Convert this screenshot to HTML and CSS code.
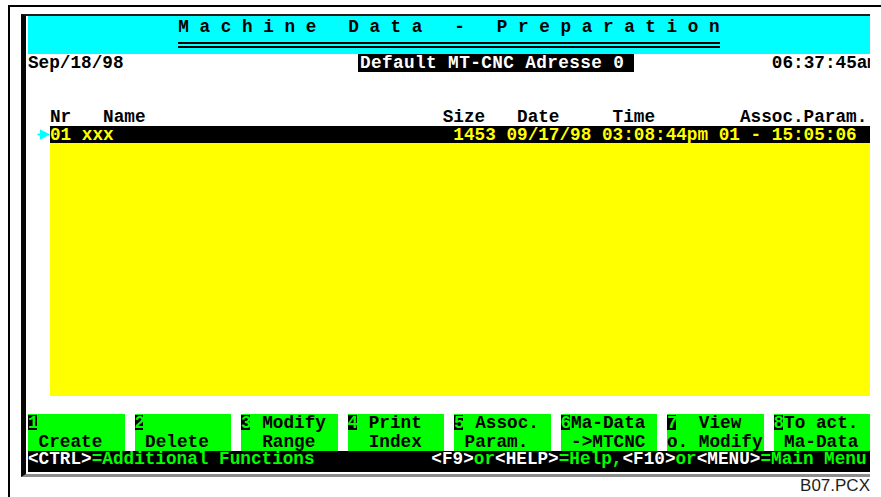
FILE: index.html
```html
<!DOCTYPE html>
<html lang="en">
<head>
<meta charset="utf-8">
<title>Machine Data - Preparation</title>
<link rel="stylesheet" href="styles.css">
</head>
<body>
<div class="frame">
  <div class="screen">
    <header class="titlebar">
      <h1 class="title">M a c h i n e   D a t a   -   P r e p a r a t i o n</h1>
    </header>

    <div class="inforow">
      <span class="date">Sep/18/98</span>
      <span class="target">Default MT-CNC Adresse 0</span>
      <span class="clock">06:37:45am</span>
    </div>

    <section class="files">
      <div class="head">Nr   Name                            Size   Date     Time        Assoc.Param.</div>
      <div class="current">
        <svg class="cursor" width="22" height="17" viewBox="0 0 22 17" aria-hidden="true">
          <rect x="9.5" y="7.6" width="5" height="1.8" fill="#00ffff"/>
          <path d="M12 3.2 L22 8.5 L12 13.8 Z" fill="#00ffff"/>
        </svg>
        <div class="bar">01 xxx                                1453 09/17/98 03:08:44pm 01 - 15:05:06</div>
      </div>
      <div class="listfill"></div>
    </section>

    <nav class="keys">
      <div class="key"><div class="kl"><span class="num">1</span></div><div class="kl"> Create</div></div>
      <div class="key"><div class="kl"><span class="num">2</span></div><div class="kl"> Delete</div></div>
      <div class="key"><div class="kl"><span class="num">3</span> Modify</div><div class="kl">  Range</div></div>
      <div class="key"><div class="kl"><span class="num">4</span> Print</div><div class="kl">  Index</div></div>
      <div class="key"><div class="kl"><span class="num">5</span> Assoc.</div><div class="kl"> Param.</div></div>
      <div class="key"><div class="kl"><span class="num">6</span>Ma-Data</div><div class="kl"> -&gt;MTCNC</div></div>
      <div class="key"><div class="kl"><span class="num">7</span>  View</div><div class="kl">o. Modify</div></div>
      <div class="key"><div class="kl"><span class="num">8</span>To act.</div><div class="kl"> Ma-Data</div></div>
    </nav>

    <div class="status"><span class="w">&lt;CTRL&gt;</span>=Additional Functions           <span class="w">&lt;F9&gt;</span>or<span class="w">&lt;HELP&gt;</span>=Help,<span class="w">&lt;F10&gt;</span>or<span class="w">&lt;MENU&gt;</span>=Main Menu</div>
  </div>
  <div class="caption">B07.PCX</div>
</div>
</body>
</html>
```

FILE: styles.css
```css
html, body {
  margin: 0;
  padding: 0;
  background: #fff;
}

body {
  width: 881px;
  height: 497px;
  overflow: hidden;
}

/* outer document frame, only its top/left edges fall inside the page */
.frame {
  margin: 5px 0 0 8px;
  border-top: 2px solid #000;
  border-left: 2px solid #000;
  padding: 7px 0 0 11px;
  height: 483px;
}

/* the text-mode screen */
.screen {
  width: 842px;
  border-left: 5px solid #060606;
  border-top: 2px solid #1c1c1c;
  border-bottom: 3px solid #8c8c8c;
  padding: 0 0 2px 2px;
  font-family: "Liberation Mono", "DejaVu Sans Mono", monospace;
  font-weight: bold;
  font-size: 17.7px;
  line-height: 18px;
  color: #000;
}

.titlebar {
  background: #00ffff;
  height: 36px;
  padding-top: 2px;
  text-align: center;
}

.title {
  display: inline-block;
  margin: 0;
  font: inherit;
  white-space: pre;
  padding-bottom: 6px;
  border-bottom: 6px double #000;
}

.inforow {
  display: flex;
  height: 18px;
  overflow: hidden;
  white-space: pre;
}

.date {
  flex: 0 0 330px;
}

.target {
  flex: 0 0 auto;
  background: #000;
  color: #fff;
  padding: 0 9.5px 0 2px;
  letter-spacing: 0.4px;
}

.clock {
  flex: 0 0 auto;
  margin-left: 138px;
}

/* file list */
.files {
  margin-top: 36px;
}

.head {
  height: 18px;
  padding-left: 22px;
  white-space: pre;
}

.current {
  display: flex;
  height: 17px;
}

.cursor {
  flex: 0 0 22px;
  display: block;
}

.bar {
  flex: 1 1 auto;
  height: 16px;
  padding-top: 1px;
  line-height: 17px;
  background: #000;
  color: #ffff00;
  white-space: pre;
}

.listfill {
  margin-left: 22px;
  height: 253px;
  background: #ffff00;
}

/* function key strip */
.keys {
  display: flex;
  gap: 10px;
  margin-top: 18px;
  height: 37px;
}

.key {
  flex: 1 1 0;
  background: #00ff00;
  line-height: 18.5px;
  height: 37px;
}

.kl {
  height: 18.5px;
  white-space: pre;
}

.num {
  display: inline-block;
  vertical-align: top;
  margin-top: 1px;
  width: 1ch;
  height: 15px;
  line-height: 16px;
  color: #00ff00;
  background: linear-gradient(90deg, #000 0 85%, transparent 85%);
}

.status {
  height: 21px;
  line-height: 16px;
  background: #000;
  color: #00ff00;
  white-space: pre;
}

.status .w {
  color: #fff;
}

.caption {
  width: 849px;
  text-align: right;
  font-family: "Liberation Sans", Arial, sans-serif;
  font-size: 17px;
  line-height: 17px;
  color: #1e1e1e;
}
```
